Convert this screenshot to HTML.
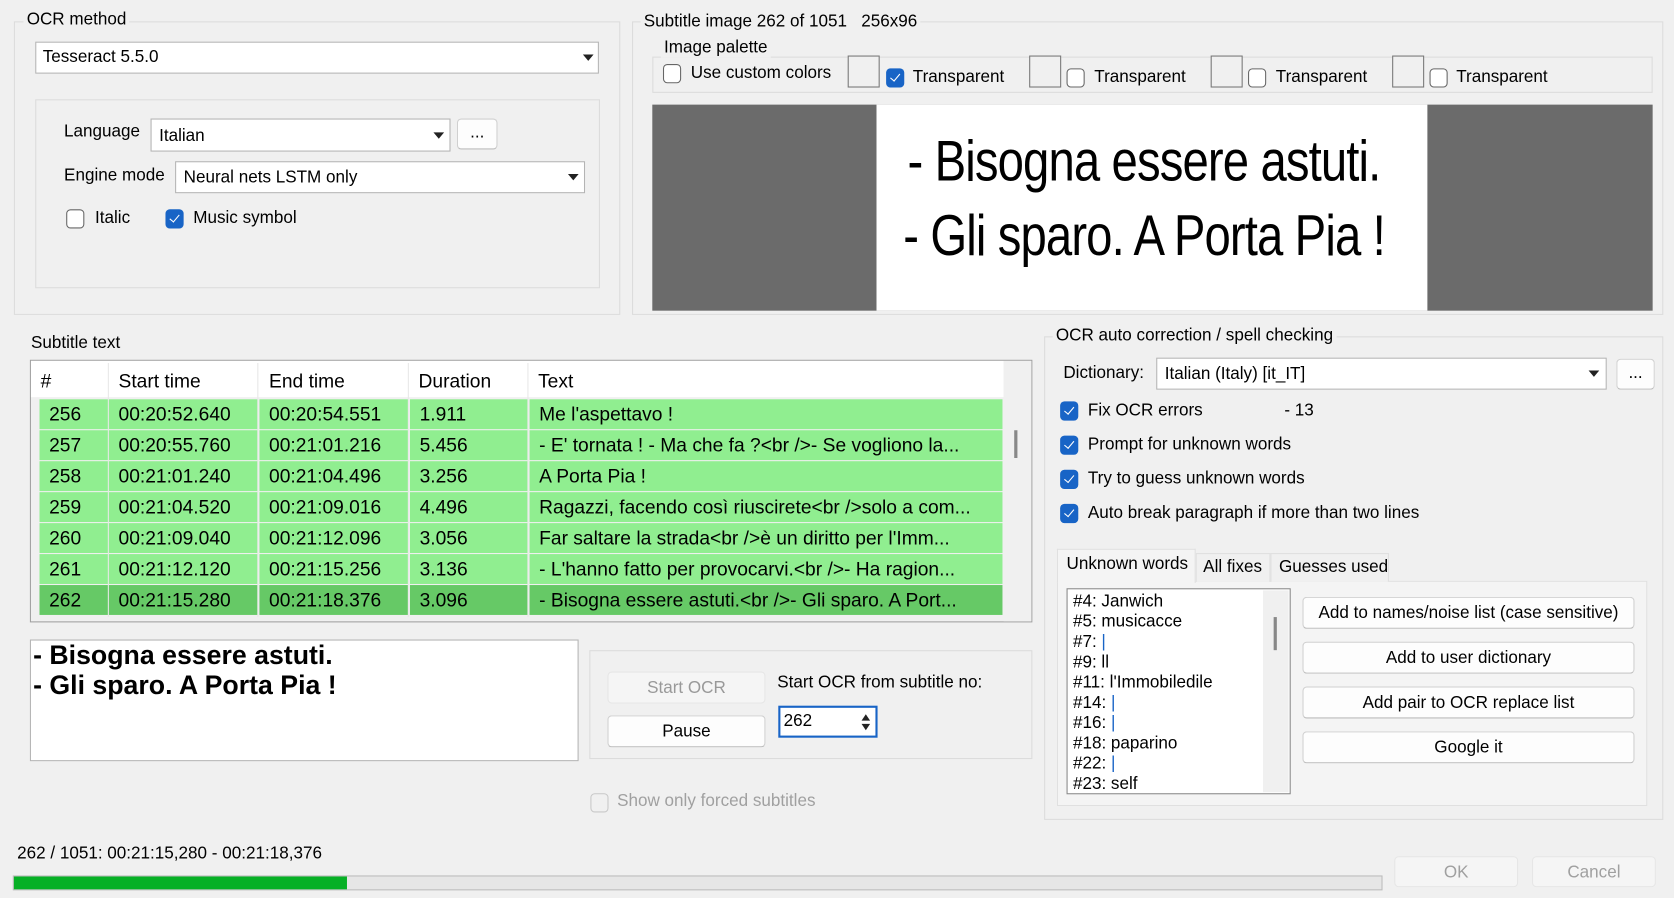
<!DOCTYPE html>
<html><head><meta charset="utf-8"><style>
html,body{margin:0;padding:0;width:1674px;height:898px;overflow:hidden;background:#f0f0f0}
#w{position:absolute;left:0;top:0;width:1568px;height:841px;transform:scale(1.06760);transform-origin:0 0;font-family:"Liberation Sans Narrow","Liberation Sans",sans-serif;font-size:16px;color:#000}
#w div,#w span{position:absolute;box-sizing:border-box}
.g{border:1px solid #dcdcdc}
.lb{background:#f0f0f0;padding:0 3px;white-space:nowrap}
.cb{background:#fff;border:1px solid #b4b4b4}
.t{white-space:nowrap}
.arr{width:0;height:0;border-left:5px solid transparent;border-right:5px solid transparent;border-top:6px solid #222}
.chk{width:17px;height:18px;border:1px solid #666;border-radius:4px;background:#fff}
.ck{width:17px;height:18px;border-radius:4px;background:#1864c6}
.ck:after{content:"";position:absolute;left:6px;top:3px;width:4px;height:8px;border:solid #fff;border-width:0 1.5px 1.5px 0;transform:rotate(40deg)}
.btn{background:#fdfdfd;border:1px solid #d0d0d0;border-radius:4px;text-align:center;border-bottom-color:#bbb}
.row div{height:28px;top:0;line-height:28px;padding-left:9px;font-size:18px}
.sw{width:30px;height:30px;border:1px solid #777;background:#f0f0f0}
</style></head><body><div id="w">
<!-- OCR method -->
<div class="g" style="left:13px;top:20px;width:568px;height:275px"></div>
<span class="lb" style="left:22px;top:10px">OCR method</span>
<div class="cb" style="left:33px;top:39px;width:528px;height:30px"><span class="t" style="left:6px;top:5px">Tesseract 5.5.0</span><div class="arr" style="left:512px;top:11px"></div></div>
<div class="g" style="left:33px;top:93px;width:529px;height:177px"></div>
<span class="t" style="left:60px;top:115px">Language</span>
<div class="cb" style="left:141px;top:111px;width:281px;height:31px"><span class="t" style="left:7px;top:7px">Italian</span><div class="arr" style="left:264px;top:12px"></div></div>
<div class="btn" style="left:428px;top:111px;width:38px;height:29px;line-height:26px">...</div>
<span class="t" style="left:60px;top:156px">Engine mode</span>
<div class="cb" style="left:164px;top:151px;width:384px;height:30px"><span class="t" style="left:7px;top:6px">Neural nets LSTM only</span><div class="arr" style="left:367px;top:11px"></div></div>
<div class="chk" style="left:62px;top:196px"></div><span class="t" style="left:89px;top:196px">Italic</span>
<div class="ck" style="left:155px;top:196px"></div><span class="t" style="left:181px;top:196px">Music symbol</span>
<!-- Subtitle image -->
<div class="g" style="left:592px;top:20px;width:966px;height:275px"></div>
<span class="lb" style="left:600px;top:12px">Subtitle image 262 of 1051&nbsp;&nbsp; 256x96</span>
<div class="g" style="left:611px;top:64px;width:937px;height:23px;top:53px;height:34px"></div>
<span class="lb" style="left:619px;top:36px">Image palette</span>
<div class="chk" style="left:621px;top:60px"></div><span class="t" style="left:647px;top:60px">Use custom colors</span>
<div class="sw" style="left:794px;top:52px"></div><div class="ck" style="left:830px;top:64px"></div><span class="t" style="left:855px;top:64px">Transparent</span>
<div class="sw" style="left:964px;top:52px"></div><div class="chk" style="left:999px;top:64px"></div><span class="t" style="left:1025px;top:64px">Transparent</span>
<div class="sw" style="left:1134px;top:52px"></div><div class="chk" style="left:1169px;top:64px"></div><span class="t" style="left:1195px;top:64px">Transparent</span>
<div class="sw" style="left:1304px;top:52px"></div><div class="chk" style="left:1339px;top:64px"></div><span class="t" style="left:1364px;top:64px">Transparent</span>
<div style="left:611px;top:98px;width:937px;height:193px;background:#6b6b6b"></div>
<div style="left:821px;top:98px;width:516px;height:193px;background:#fff"></div>
<span class="t" style="left:850px;top:120px;font-size:54px;transform:scaleX(0.82);transform-origin:0 0;letter-spacing:-1px">- Bisogna essere astuti.</span>
<span class="t" style="left:846px;top:190px;font-size:54px;transform:scaleX(0.82);transform-origin:0 0;letter-spacing:-1px">- Gli sparo. A Porta Pia !</span>
<!-- Subtitle text -->
<span class="t" style="left:29px;top:313px">Subtitle text</span>
<div style="left:28px;top:337px;width:939px;height:246px;border:1px solid #a0a0a0;background:#f0f0f0"></div>
<div style="left:29px;top:338px;width:911px;height:34px;background:#fff"></div>
<div style="left:101px;top:340px;width:1px;height:238px;background:#e8e8e8"></div>
<div style="left:241px;top:340px;width:1px;height:238px;background:#e8e8e8"></div>
<div style="left:382px;top:340px;width:1px;height:238px;background:#e8e8e8"></div>
<div style="left:494px;top:340px;width:1px;height:238px;background:#e8e8e8"></div>
<span class="t" style="left:38px;top:347px;font-size:18px">#</span>
<span class="t" style="left:111px;top:347px;font-size:18px">Start time</span>
<span class="t" style="left:252px;top:347px;font-size:18px">End time</span>
<span class="t" style="left:392px;top:347px;font-size:18px">Duration</span>
<span class="t" style="left:504px;top:347px;font-size:18px">Text</span>
<div style="left:940px;top:338px;width:26px;height:244px;background:#f0f0f0"></div>
<div style="left:950px;top:403px;width:3px;height:26px;background:#888"></div>
<div id="rows"></div>
<!-- text box -->
<div style="left:28px;top:599px;width:514px;height:114px;background:#fff;border:1px solid #b4b4b4"></div>
<span class="t" style="left:31px;top:600px;font-size:25px;font-weight:bold;line-height:28px">- Bisogna essere astuti.<br>- Gli sparo. A Porta Pia !</span>
<div class="g" style="left:552px;top:609px;width:415px;height:102px"></div>
<div class="btn" style="left:569px;top:629px;width:148px;height:30px;line-height:30px;color:#999;background:#f5f5f5;border-color:#e6e6e6">Start OCR</div>
<div class="btn" style="left:569px;top:670px;width:148px;height:30px;line-height:30px">Pause</div>
<span class="t" style="left:728px;top:631px">Start OCR from subtitle no:</span>
<div style="left:729px;top:661px;width:93px;height:30px;background:#fff;border:2px solid #1864c6"><span class="t" style="left:3px;top:4px">262</span><div style="left:76px;top:6px;width:0;height:0;border-left:4px solid transparent;border-right:4px solid transparent;border-bottom:6px solid #222"></div><div style="left:76px;top:15px;width:0;height:0;border-left:4px solid transparent;border-right:4px solid transparent;border-top:6px solid #222"></div></div>
<div class="chk" style="left:553px;top:743px;border-color:#c8c8c8;background:#f0f0f0"></div><span class="t" style="left:578px;top:742px;color:#a0a0a0">Show only forced subtitles</span>
<!-- right group -->
<div class="g" style="left:978px;top:315px;width:580px;height:453px"></div>
<span class="lb" style="left:986px;top:306px">OCR auto correction / spell checking</span>
<span class="t" style="left:996px;top:341px">Dictionary:</span>
<div class="cb" style="left:1083px;top:335px;width:422px;height:30px"><span class="t" style="left:7px;top:6px">Italian (Italy) [it_IT]</span><div class="arr" style="left:404px;top:11px"></div></div>
<div class="btn" style="left:1514px;top:336px;width:36px;height:29px;line-height:26px">...</div>
<div class="ck" style="left:993px;top:376px"></div><span class="t" style="left:1019px;top:376px">Fix OCR errors</span><span class="t" style="left:1203px;top:376px">- 13</span>
<div class="ck" style="left:993px;top:408px"></div><span class="t" style="left:1019px;top:408px">Prompt for unknown words</span>
<div class="ck" style="left:993px;top:440px"></div><span class="t" style="left:1019px;top:440px">Try to guess unknown words</span>
<div class="ck" style="left:993px;top:472px"></div><span class="t" style="left:1019px;top:472px">Auto break paragraph if more than two lines</span>
<div style="left:990px;top:544px;width:553px;height:211px;background:#f4f4f4;border:1px solid #e0e0e0"></div>
<div style="left:1120px;top:518px;width:70px;height:27px;border:1px solid #e0e0e0;border-bottom:none;background:#f0f0f0"></div>
<div style="left:1190px;top:518px;width:111px;height:27px;border:1px solid #e0e0e0;border-bottom:none;background:#f0f0f0"></div>
<div style="left:990px;top:514px;width:130px;height:32px;background:#f4f4f4;border:1px solid #e0e0e0;border-bottom:none"></div>
<span class="t" style="left:999px;top:520px">Unknown words</span>
<span class="t" style="left:1127px;top:523px">All fixes</span>
<span class="t" style="left:1198px;top:523px">Guesses used</span>
<div style="left:999px;top:551px;width:210px;height:193px;background:#fff;border:1px solid #888"></div>
<div style="left:1183px;top:553px;width:24px;height:189px;background:#f0f0f0"></div>
<div style="left:1193px;top:578px;width:3px;height:31px;background:#888"></div>
<span class="t" style="left:1005px;top:554px;line-height:19px">#4: Janwich<br>#5: musicacce<br>#7: <span style="position:static;color:#1864c6">|</span><br>#9: ll<br>#11: l'Immobiledile<br>#14: <span style="position:static;color:#1864c6">|</span><br>#16: <span style="position:static;color:#1864c6">|</span><br>#18: paparino<br>#22: <span style="position:static;color:#1864c6">|</span><br>#23: self</span>
<div class="btn" style="left:1220px;top:559px;width:311px;height:30px;line-height:29px">Add to names/noise list (case sensitive)</div>
<div class="btn" style="left:1220px;top:601px;width:311px;height:30px;line-height:29px">Add to user dictionary</div>
<div class="btn" style="left:1220px;top:643px;width:311px;height:30px;line-height:29px">Add pair to OCR replace list</div>
<div class="btn" style="left:1220px;top:685px;width:311px;height:30px;line-height:29px">Google it</div>
<!-- bottom -->
<span class="t" style="left:16px;top:791px">262 / 1051: 00:21:15,280 - 00:21:18,376</span>
<div style="left:12px;top:820px;width:1283px;height:14px;background:#e6e6e6;border:1px solid #bcbcbc"></div>
<div style="left:13px;top:821px;width:312px;height:12px;background:#06b025"></div>
<div class="btn" style="left:1306px;top:802px;width:116px;height:29px;line-height:29px;color:#a0a0a0;background:#f5f5f5;border-color:#e6e6e6">OK</div>
<div class="btn" style="left:1435px;top:802px;width:116px;height:29px;line-height:29px;color:#a0a0a0;background:#f5f5f5;border-color:#e6e6e6">Cancel</div>
</div>
<script>
var d=[["256","00:20:52.640","00:20:54.551","1.911","Me l'aspettavo !"],["257","00:20:55.760","00:21:01.216","5.456","- E' tornata ! - Ma che fa ?&lt;br /&gt;- Se vogliono la..."],["258","00:21:01.240","00:21:04.496","3.256","A Porta Pia !"],["259","00:21:04.520","00:21:09.016","4.496","Ragazzi, facendo così riuscirete&lt;br /&gt;solo a com..."],["260","00:21:09.040","00:21:12.096","3.056","Far saltare la strada&lt;br /&gt;è un diritto per l'Imm..."],["261","00:21:12.120","00:21:15.256","3.136","- L'hanno fatto per provocarvi.&lt;br /&gt;- Ha ragion..."],["262","00:21:15.280","00:21:18.376","3.096","- Bisogna essere astuti.&lt;br /&gt;- Gli sparo. A Port..."]];
var x=[[37,64],[102,139],[243,139],[384,110],[496,443]],h="";
d.forEach(function(r,i){var c=i==6?"#66c966":"#90ee90",t=374+i*29;h+='<div class="row" style="left:0;top:'+t+'px;width:940px;height:28px">';r.forEach(function(v,j){h+='<div style="left:'+x[j][0]+'px;width:'+x[j][1]+'px;background:'+c+'">'+v+'</div>'});h+='</div>'});
document.getElementById("rows").outerHTML=h;
</script>
</body></html>
